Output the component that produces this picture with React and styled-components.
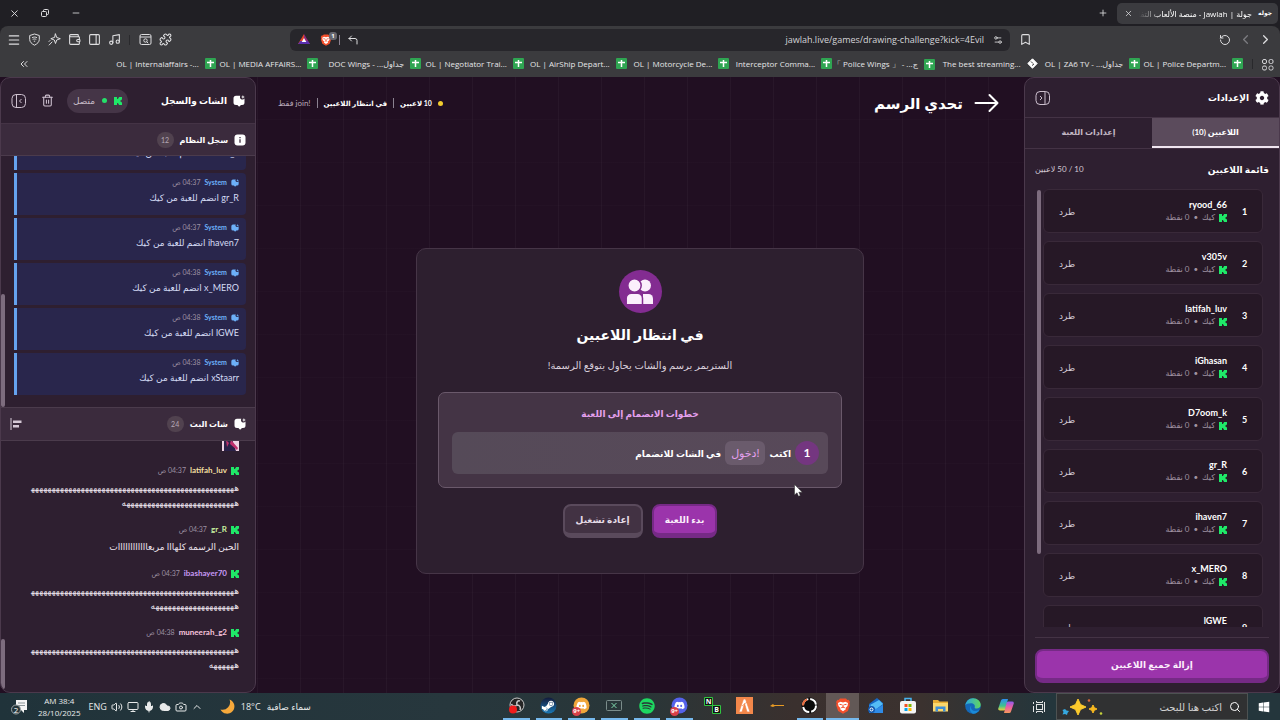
import React from 'react';
import styled, { createGlobalStyle, css } from 'styled-components';
import {
  X, Copy, Minus, Plus, Menu, Wallet, PanelRight, Music, Puzzle, CornerUpLeft,
  Bookmark, RotateCcw, ChevronLeft, ChevronRight, ChevronsLeft, Trash2, Settings2,
  Search, Volume2, Monitor, Mic, Cloud, Camera, ChevronUp,
} from 'lucide-react';
import { FaSteamSymbol, FaSpotify, FaDiscord, FaEdge, FaWindows, FaCog } from 'react-icons/fa';

const GlobalStyle = createGlobalStyle`
  * { box-sizing: border-box; }

  body {
    margin: 0;
    background: #210f22;
    font-family: Lato, "DejaVu Sans", sans-serif;
    color: #fff;
  }

  button, input { font: inherit; color: inherit; }
  ul, ol { list-style: none; margin: 0; padding: 0; }
  h1, h2, h3, p { margin: 0; }
`;

/* Browser window */

const Desktop = styled.div`
  display: flex;
  flex-direction: column;
  height: 100vh;
  overflow: hidden;
`;

const Chrome = styled.header`
  background: #201f24;
  font-family: "Open Sans", "DejaVu Sans", sans-serif;
`;

const TitleBar = styled.div`
  display: flex;
  align-items: center;
  height: 26px;
  padding: 0 2px;
`;

const Tab = styled.div`
  display: flex;
  align-items: center;
  gap: 6px;
  width: 161px;
  height: 21px;
  padding: 0 6px;
  border-radius: 5px;
  background: #3b3b3f;
  font-size: 8px;
`;

const Favicon = styled.span`
  font-size: 6px;
  font-weight: 700;
`;

const TabTitle = styled.span`
  flex: 1;
  overflow: hidden;
  white-space: nowrap;
  mask-image: linear-gradient(to left, #000 80%, transparent);
`;

const IconButton = styled.button`
  display: flex;
  align-items: center;
  justify-content: center;
  flex-shrink: 0;
  width: ${({ $size }) => $size || 20}px;
  height: ${({ $size }) => $size || 20}px;
  margin-right: ${({ $push }) => ($push ? 'auto' : '0')};
  padding: 0;
  border: 0;
  background: none;
  color: ${({ $color }) => $color || '#dedee0'};

  svg { flex-shrink: 0; }
`;

const WindowControls = styled.div`
  display: flex;
  gap: 11px;
  margin-right: auto;
  padding-left: 2px;
`;

const Toolbar = styled.div`
  display: flex;
  align-items: center;
  height: 27px;
  padding: 0 5px 0 4px;
  border-radius: 8px 8px 0 0;
  background: #3b3b3e;
`;

const AddressBar = styled.div`
  display: flex;
  align-items: center;
  gap: 4px;
  flex: 0 0 720px;
  height: 22px;
  margin: 0 5px 0 115px;
  padding: 0 2px 0 4px;
  border-radius: 6px;
  background: #27262b;
`;

const AddressInput = styled.input`
  flex: 1;
  min-width: 0;
  padding: 0;
  border: 0;
  outline: 0;
  background: none;
  font-size: 9px;
  text-align: right;
  color: #d4d4d8;
`;

const ToolGroup = styled.div`
  display: flex;
  align-items: center;
`;

const Divider = styled.span`
  width: 1px;
  height: ${({ $height }) => $height || 10}px;
  margin: 0 ${({ $gap }) => $gap || 0}px;
  background: ${({ $color }) => $color || '#8b8291'};
`;

const BraveBadge = styled.span`
  position: relative;
  display: flex;

  b {
    position: absolute;
    top: -2px;
    right: -5px;
    width: 8px;
    height: 8px;
    border-radius: 3px;
    background: #66666e;
    color: #fff;
    font-size: 6px;
    line-height: 8px;
    text-align: center;
  }
`;

const Bookmarks = styled.nav`
  display: flex;
  align-items: center;
  height: 24px;
  padding: 0 3px 2px 14px;
  background: #3b3b3e;
`;

const BookmarkList = styled.ul`
  display: grid;
  grid-template-columns: repeat(11, minmax(0, 1fr));
  flex: 0 1 1130px;
  margin: 0 5px 0 auto;
`;

const BookmarkLink = styled.a`
  display: flex;
  align-items: center;
  gap: 6px;
  color: #e6e6e8;
  font-size: 8px;
  font-weight: 500;
  white-space: nowrap;
  text-decoration: none;

  svg { flex-shrink: 0; }
`;

/* Page */

const Page = styled.div`
  display: flex;
  flex: 1;
  min-height: 0;
  background:
    repeating-linear-gradient(to right, transparent 0 42px, rgba(255, 255, 255, 0.03) 42px 43px),
    repeating-linear-gradient(to bottom, transparent 0 42px, rgba(255, 255, 255, 0.01) 42px 43px),
    #210f22;
`;

const Panel = styled.aside`
  display: flex;
  flex-direction: column;
  flex: 0 0 20%;
  min-width: 240px;
  border: 1px solid #4b394c;
  border-radius: 10px;
  background: #2e1f30;
  overflow: hidden;
`;

const PanelHeader = styled.div`
  display: flex;
  align-items: center;
  gap: 6px;
  height: ${({ $height }) => $height}px;
  flex-shrink: 0;
  padding: 0 10px;
  border-bottom: 1px solid #443345;
`;

const PanelTitle = styled.h2`
  margin-left: auto;
  font-size: 9px;
  font-weight: 700;
`;

const Tabs = styled.div`
  display: grid;
  grid-template-columns: 1fr 1fr;
  height: 31px;
  flex-shrink: 0;
  border-bottom: 1px solid #443345;
`;

const TabButton = styled.button`
  padding: 0 0 1px;
  border: 0;
  border-bottom: 2px solid ${({ $active }) => ($active ? '#f0e6f0' : 'transparent')};
  background: ${({ $active }) => ($active ? '#5b4b5c' : 'none')};
  color: ${({ $active }) => ($active ? '#fff' : '#c3b8c4')};
  font-size: 8px;
  font-weight: 700;
`;

const ListHeading = styled.div`
  display: flex;
  align-items: center;
  justify-content: space-between;
  height: 40px;
  flex-shrink: 0;
  padding: 0 10px;

  h3 { font-size: 9px; }
  span { font-size: 8px; color: #d3c9d4; }
`;

const ScrollArea = styled.div`
  position: relative;
  display: flex;
  flex-direction: column;
  flex: 1;
  min-height: 0;
  overflow: hidden;
  justify-content: ${({ $end }) => ($end ? 'flex-end' : 'flex-start')};
`;

const ScrollThumb = styled.span`
  position: absolute;
  left: ${({ $left }) => $left || 0}px;
  top: ${({ $top }) => $top};
  width: 4px;
  height: ${({ $height }) => $height};
  border-radius: 2px;
  background: #7d6c7e;
`;

const PlayerList = styled.ol`
  display: flex;
  flex-direction: column;
  gap: 8px;
  padding: 0 16px 0 18px;
`;

const PlayerRow = styled.li`
  display: flex;
  align-items: center;
  gap: 11px;
  height: 44px;
  flex-shrink: 0;
  padding: 0 11px 0 15px;
  border: 1px solid #392939;
  border-radius: 6px;
  background: #261826;
`;

const Rank = styled.span`
  width: 13px;
  font-size: 9px;
  font-weight: 700;
  text-align: center;
`;

const PlayerInfo = styled.div`
  flex: 1;
  line-height: 13px;
`;

const PlayerName = styled.div`
  font-size: 9px;
  font-weight: 700;
`;

const PlayerMeta = styled.div`
  display: flex;
  align-items: center;
  gap: 4px;
  font-size: 8px;
  color: #a093a1;
`;

const KickOut = styled.button`
  padding: 0;
  border: 0;
  background: none;
  font-size: 9px;
  color: #d3c9d4;
`;

const PanelFooter = styled.div`
  margin: 10px 10px 0;
  padding: 11px 0 9px;
  border-top: 1px solid #443345;
`;

const RaisedButton = styled.button`
  height: 34px;
  padding: 0 11px 1px;
  border: 2px solid #762a86;
  border-bottom-width: 5px;
  border-radius: 8px;
  background: #9b34ab;
  color: #fbeffc;
  font-size: 9px;
  font-weight: 700;

  ${({ $wide }) => $wide && css`width: 100%;`}
  ${({ $muted }) => $muted && css`
    border-color: #5a4a5c;
    background: #423243;
    color: #e6dce7;
  `}
`;

/* Game stage */

const Stage = styled.main`
  display: flex;
  flex-direction: column;
  flex: 1;
  min-width: 0;
`;

const StageHeader = styled.div`
  display: flex;
  align-items: center;
  gap: 11px;
  height: 52px;
  padding: 0 25px 0 22px;
`;

const StageTitle = styled.h1`
  margin-left: auto;
  font-size: 15px;
  font-weight: 700;
`;

const Status = styled.div`
  display: flex;
  align-items: center;
  gap: 6px;
  font-size: 7px;
  font-weight: 700;
  white-space: nowrap;
`;

const Dot = styled.i`
  width: 5px;
  height: 5px;
  border-radius: 50%;
  background: ${({ $color }) => $color};
`;

const Soft = styled.span`
  font-size: 8px;
  font-weight: 400;
  color: #b9abba;
`;

const StageBody = styled.div`
  display: flex;
  flex: 1;
  align-items: center;
  justify-content: center;
`;

const LobbyCard = styled.section`
  display: flex;
  flex-direction: column;
  align-items: center;
  width: 58%;
  min-width: 448px;
  padding: 21px 21px 35px;
  border: 1px solid #463547;
  border-radius: 10px;
  background: #2d1f2f;
`;

const RoundIcon = styled.div`
  display: flex;
  align-items: center;
  justify-content: center;
  width: 43px;
  height: 43px;
  border-radius: 50%;
  background: #832c91;
`;

const LobbyTitle = styled.h2`
  margin-top: 8px;
  font-size: 14px;
  line-height: 28px;
`;

const LobbyText = styled.p`
  margin-top: 7px;
  font-size: 10px;
  line-height: 18px;
  color: #d8ceda;
`;

const Steps = styled.div`
  width: 100%;
  margin: 18px 0 16px;
  padding: 11px 13px 13px;
  border: 1px solid #6a596b;
  border-radius: 7px;
  background: #443445;
  text-align: center;

  h3 {
    margin-bottom: 8px;
    color: #e4a0ee;
    font-size: 9px;
    line-height: 20px;
  }
`;

const Step = styled.div`
  display: flex;
  align-items: center;
  gap: 4px;
  height: 42px;
  padding: 0 9px;
  border-radius: 6px;
  background: linear-gradient(to left, #584959, #554a58);
  font-size: 9px;
  font-weight: 700;
`;

const StepNumber = styled.span`
  width: 24px;
  height: 24px;
  border-radius: 50%;
  background: #743680;
  font-size: 12px;
  line-height: 24px;
`;

const Command = styled.code`
  padding: 0 6px;
  border-radius: 6px;
  background: #6a5b6c;
  color: #e4a0ee;
  font-family: Lato, "DejaVu Sans", sans-serif;
  font-size: 11px;
  font-weight: 400;
  line-height: 24px;
`;

const Actions = styled.div`
  display: flex;
  gap: 9px;
`;

/* Chat */

const Connection = styled.span`
  display: flex;
  align-items: center;
  gap: 7px;
  height: 24px;
  padding: 0 6px;
  border-radius: 12px;
  background: #453547;
  color: #c5bac6;
  font-size: 9px;
`;

const SectionHeader = styled.div`
  display: flex;
  align-items: center;
  gap: 6px;
  height: ${({ $height }) => $height}px;
  flex-shrink: 0;
  padding: 0 9px;
  border-top: ${({ $line }) => ($line ? '1px solid #4b3b4c' : '0')};
  border-bottom: 1px solid #4b3b4c;
  background: #3b2b3d;

  h3 { font-size: 8px; }
`;

const Count = styled.span`
  min-width: 17px;
  border-radius: 9px;
  background: #51424f;
  color: #b5a8b6;
  font-size: 7px;
  line-height: 16px;
  text-align: center;
`;

const Log = styled.ul`
  display: flex;
  flex-direction: column;
  gap: 3px;
  padding: 0 9px 12px 13px;
`;

const LogItem = styled.li`
  height: 42px;
  flex-shrink: 0;
  padding: 2px 7px 0;
  border-left: 3px solid #65a2ee;
  border-radius: 0 4px 4px 0;
  background: #29264c;
`;

const Byline = styled.div`
  display: flex;
  align-items: center;
  gap: 4px;
  font-size: ${({ $size }) => $size || 7}px;
  line-height: 15px;

  b { color: ${({ $color }) => $color}; }
  time { color: #9d90a2; font-size: 7px; }
`;

const LogText = styled.p`
  font-size: 9px;
  line-height: 15px;
  color: #d5dcf5;
`;

const Messages = styled.ul`
  display: flex;
  flex-direction: column;
  gap: 12px;
  padding: 0 16px 20px 20px;
`;

const MessageText = styled.p`
  margin-top: 2px;
  color: #ece3ed;
  font-size: 9px;
  line-height: 15px;
  white-space: nowrap;
`;

/* Taskbar */

const Taskbar = styled.footer`
  display: flex;
  align-items: center;
  height: 27px;
  flex-shrink: 0;
  background: linear-gradient(to right, #20333a, #27373d 35%, #293638 50%, #3a302e 62%, #3b322f 72%, #24363c 82%, #24363c);
  font-family: "Open Sans", "DejaVu Sans", sans-serif;
`;

const SearchBox = styled.label`
  display: flex;
  align-items: center;
  gap: 7px;
  flex: 0 0 192px;
  min-width: 0;
  height: 27px;
  padding: 0 6px 0 4px;
  border: 1px solid #4d5252;
  background: #303132;

  input {
    flex: 1;
    width: 0;
    min-width: 0;
    padding: 0;
    border: 0;
    outline: 0;
    background: none;
    font-size: 10px;
  }
  input::placeholder { color: #d2d2d2; opacity: 1; }
  svg { flex-shrink: 0; }
`;

const Apps = styled.div`
  display: grid;
  grid-template-columns: repeat(16, 1fr);
  flex: 0 0 522px;
  height: 27px;
`;

const AppButton = styled.button`
  position: relative;
  display: flex;
  align-items: center;
  justify-content: center;
  margin: 0 ${({ $active }) => ($active ? 0 : 3)}px;
  padding: 0;
  border: 0;
  border-bottom: 2px solid ${({ $open }) => ($open ? '#76b9ed' : 'transparent')};
  background: ${({ $active }) => ($active ? '#625856' : 'none')};

  svg { flex-shrink: 0; }
`;

const Alert = styled.span`
  position: absolute;
  left: 4px;
  bottom: 2px;
  width: 9px;
  height: 9px;
  border-radius: 50%;
  background: #d8404a;
  color: #fff;
  font-size: 6px;
  font-weight: 700;
  line-height: 9px;
`;

const Weather = styled.div`
  display: flex;
  align-items: center;
  gap: 6px;
  margin-right: auto;
  font-size: 9px;
  color: #e8eaea;
`;

const Tray = styled.div`
  display: flex;
  align-items: center;
  gap: 4px;
  padding: 0 17px 0 11px;
  font-size: 9px;
  color: #e8eaea;
`;

const Clock = styled.div`
  margin: 0 4px 0 6px;
  font-size: 8px;
  line-height: 12px;
  text-align: center;
`;

const Pointer = styled.svg`
  position: fixed;
  left: 794px;
  top: 484px;
`;

/* Drawn icons */

const KickIcon = ({ size = 8 }) => (
  <svg width={size} height={size} viewBox="0 0 9 9" fill="#1fe868" aria-hidden="true">
    <path d="M0 0h3.400v2.300h1v-1h1V0H9v3H8v1H7v1h1v1h1v3H5.400V7.700h-1v-1h-1V9H0z" />
  </svg>
);

const BubbleIcon = ({ size = 12, color = '#fff' }) => (
  <svg width={size} height={size} viewBox="0 0 12 12" fill={color} aria-hidden="true">
    <path d="M3 .8h4.300a2.400 2.400 0 0 0 1.400 3.600 2.400 2.400 0 0 0 2.800-.9v3.900a2.500 2.500 0 0 1-2.500 2.500H8L6.100 11.800 4.400 9.900H3A2.500 2.500 0 0 1 .5 7.400V3.300A2.500 2.500 0 0 1 3 .8z" />
    <path d="M9.900 0l.6 1.400 1.400.6-1.400.5-.6 1.400-.5-1.400L8 2l1.400-.6z" />
  </svg>
);

const PanelIcon = ({ flip }) => (
  <svg width="16" height="16" viewBox="0 0 16 16" fill="none" stroke="#cdc0ce" aria-hidden="true">
    <rect x="1" y="1.500" width="13.500" height="13" rx="4" />
    <path d={flip ? 'M10 1.500v13M5 6l2 2-2 2' : 'M5.500 1.500v13M10.500 6l-2 2 2 2'} />
  </svg>
);

const BraveIcon = ({ size = 12 }) => (
  <svg width={size} height={size} viewBox="0 0 16 16" aria-hidden="true">
    <path d="M5 .5h6l1.300 1.500 1.200-.2L15 4l-.6 1.500.5 1.500-2 6L8 15.800 3.100 13l-2-6 .5-1.500L1 4l1.500-2.200L3.700 2z" fill="#f4502c" />
    <path d="M3 5l2.500-1.200L8 4.400l2.500-.6L13 5l-.5 3-2 2 .3 1.300L8 13.300l-2.800-2 .3-1.300-2-2z" fill="#fff" />
    <path d="M4.500 6.200l2.300.5M11.500 6.200l-2.300.5M8 6.500V9M6.300 9.800L8 9l1.700.8" stroke="#f4502c" strokeWidth="1.100" fill="none" />
  </svg>
);

const ShieldIcon = () => (
  <svg width="13" height="13" viewBox="0 0 13 13" fill="none" stroke="currentColor" aria-hidden="true">
    <path d="M6.500 1l4.800 1.500v4c0 2.500-2 4.300-4.800 5.700-2.800-1.400-4.800-3.200-4.800-5.700v-4z" />
    <path d="M4 4.800c1.500-1 3.500-1 5 0M4.700 6.500c1-.7 2.600-.7 3.600 0M5.800 8.200h1.400" />
  </svg>
);

const SparkIcon = () => (
  <svg width="13" height="13" viewBox="0 0 13 13" fill="none" stroke="currentColor" strokeLinejoin="round" strokeLinecap="round" aria-hidden="true">
    <path d="M7.500 1l1.200 3.500L12.300 5.700 8.700 7 7.500 10.500 6.300 7 2.800 5.700l3.500-1.200z" />
    <path d="M4 9l-2.800 3M2 7.500L1 8.500" />
  </svg>
);

const PageSearchIcon = () => (
  <svg width="13" height="13" viewBox="0 0 13 13" fill="none" stroke="currentColor" aria-hidden="true">
    <rect x="1" y="1.500" width="11" height="10" rx="1.500" />
    <path d="M1 4h11M7.800 8.800l1.400 1.400" />
    <circle cx="6.500" cy="7.500" r="1.700" />
  </svg>
);

const RestoreIcon = () => (
  <svg width="8" height="8" viewBox="0 0 8 8" fill="none" stroke="currentColor" aria-hidden="true">
    <rect x=".5" y="2.500" width="5" height="5" rx="1" />
    <path d="M2.500 2V1.500a1 1 0 0 1 1-1h3a1 1 0 0 1 1 1v3a1 1 0 0 1-1 1H6" />
  </svg>
);

const SheetIcon = () => (
  <svg width="11" height="11" viewBox="0 0 11 11" aria-hidden="true">
    <rect width="11" height="11" rx="1" fill="#2fa552" />
    <path d="M2 4.500h7M5.500 2v7" stroke="#fff" strokeWidth="1.500" />
  </svg>
);

const DiamondIcon = () => (
  <svg width="11" height="11" viewBox="0 0 11 11" aria-hidden="true">
    <path d="M5.500.8l4.700 4.700-4.700 4.700L.8 5.500z" fill="#fff" stroke="#fff" strokeLinejoin="round" />
    <path d="M4 3.500l2 2M5 7.500l2-1.500" stroke="#3b3b3e" />
  </svg>
);

const GridIcon = () => (
  <svg width="13" height="13" viewBox="0 0 13 13" fill="none" stroke="#d5d5d8" aria-hidden="true">
    <rect x="1.500" y="1.500" width="4" height="4" rx="1.500" />
    <rect x="8" y="1.500" width="4" height="4" rx="1.500" />
    <rect x="1.500" y="8" width="4" height="4" rx="1.500" />
    <rect x="8" y="8" width="4" height="4" rx="1.500" />
  </svg>
);

const TriangleIcon = () => (
  <svg width="12" height="11" viewBox="0 0 12 11" aria-hidden="true">
    <path d="M6 0L0 10h6z" fill="#e2452b" />
    <path d="M6 0l6 10H6z" fill="#8c2a7c" />
    <path d="M0 10h12L9.500 7h-7z" fill="#5a2fb0" />
    <path d="M6 4l2.300 4H3.700z" fill="#fff" />
  </svg>
);

const PlayersIcon = () => (
  <svg width="28" height="26" viewBox="0 0 28 26" fill="#fbeffc" aria-hidden="true">
    <circle cx="19" cy="6.500" r="6" />
    <path d="M17 15h5.500a4.500 4.500 0 0 1 4.500 4.500V25H17z" />
    <g stroke="#832c91" strokeWidth="1.500">
      <circle cx="8.500" cy="6.500" r="6.700" />
      <path d="M6 14.300h5.500a5 5 0 0 1 5 5v6.400H.200v-6.400a5 5 0 0 1 5-5z" />
    </g>
  </svg>
);

const ArrowIcon = () => (
  <svg width="25" height="20" viewBox="0 0 25 20" fill="none" stroke="#fff" strokeWidth="2" strokeLinecap="round" strokeLinejoin="round" aria-hidden="true">
    <path d="M1.500 10h21.500M15.500 2l8 8-8 8" />
  </svg>
);

const InfoIcon = () => (
  <svg width="12" height="12" viewBox="0 0 12 12" aria-hidden="true">
    <rect x=".5" y=".5" width="11" height="11" rx="3" fill="#fff" />
    <path d="M6 5.300v3.500M6 3v1.200" stroke="#3b2b3d" strokeWidth="1.300" />
  </svg>
);

const AlignIcon = () => (
  <svg width="12" height="12" viewBox="0 0 12 12" fill="#d6cad7" aria-hidden="true">
    <path d="M.5 0h1v12h-1zM3 2.500h8.500V5H3zM3 7h6v2.500H3z" />
  </svg>
);

const Emote = styled.svg`
  display: block;
  width: 17px;
  height: 15px;
`;

const EmoteImage = () => (
  <Emote viewBox="0 0 17 15" aria-hidden="true">
    <path d="M0 0h17v15H0z" fill="#2b2148" />
    <path d="M0 0h2v15H0zM9 0h8v15h-3z" fill="#f0d4e4" />
    <path d="M4 4l3 3-2 4zM9 4l7 8-1 2-7-6z" fill="#c0306c" />
  </Emote>
);

const ObsIcon = () => (
  <svg width="17" height="17" viewBox="0 0 17 17" aria-hidden="true">
    <circle cx="9" cy="8" r="7" fill="#252525" stroke="#c9c9c9" />
    <path d="M9 8c-1-3 1-5 3-4M9 8c3 0 4 3 3 5M9 8C7 10 4 9 3.500 7" stroke="#c9c9c9" strokeWidth="1.500" fill="none" />
    <circle cx="5" cy="12.500" r="4" fill="#f01c1c" />
  </svg>
);

const SteamIcon = () => (
  <svg width="17" height="17" viewBox="0 0 17 17" aria-hidden="true">
    <defs>
      <linearGradient id="steam" x1="0" y1="0" x2="0" y2="1">
        <stop offset="0" stopColor="#131a3a" /><stop offset="1" stopColor="#1a78b5" />
      </linearGradient>
    </defs>
    <circle cx="8.500" cy="8.500" r="8" fill="url(#steam)" />
    <FaSteamSymbol x="1" y="2" size={14} color="#fff" />
  </svg>
);

const OrangeChatIcon = () => (
  <svg width="17" height="17" viewBox="0 0 17 17" aria-hidden="true">
    <circle cx="8.500" cy="8.500" r="8" fill="#f0a63a" />
    <FaDiscord x="3" y="3" size={11} color="#fff" />
  </svg>
);

const RoundDiscord = () => (
  <svg width="17" height="17" viewBox="0 0 17 17" aria-hidden="true">
    <circle cx="8.500" cy="8.500" r="8" fill="#5562ea" />
    <FaDiscord x="3" y="3" size={11} color="#fff" />
  </svg>
);

const ScreenIcon = () => (
  <svg width="16" height="11" viewBox="0 0 16 11" fill="none" aria-hidden="true">
    <rect x=".5" y=".5" width="15" height="10" rx="1" stroke="#7b8d8b" />
    <path d="M5.500 3l5 5M10.500 3l-5 5" stroke="#7fd6ac" />
  </svg>
);

const BlocksIcon = () => (
  <svg width="17" height="17" viewBox="0 0 17 17" aria-hidden="true">
    <path d="M.5.5h8v8h-8zM8.500 8.500h8v8h-8z" fill="#101410" stroke="#31c441" />
    <text x="4.500" y="7" fill="#fff" fontSize="7" fontWeight="700" textAnchor="middle">N</text>
    <text x="12.500" y="15" fill="#fff" fontSize="7" fontWeight="700" textAnchor="middle">B</text>
  </svg>
);

const FiveIcon = () => (
  <svg width="17" height="17" viewBox="0 0 17 17" aria-hidden="true">
    <path d="M0 0h17v17H0z" fill="#f2874a" />
    <path d="M3 15L7.500 2h2L14 15h-3L8.500 6.500 6 15zM6 9l5-4" fill="#fff" stroke="#f2874a" strokeWidth=".7" />
  </svg>
);

const DashIcon = () => (
  <svg width="14" height="5" viewBox="0 0 14 5" aria-hidden="true">
    <path d="M0 3l3-2 1 1h10v1H5L3 4z" fill="#e89a24" />
  </svg>
);

const RingIcon = () => (
  <svg width="17" height="17" viewBox="0 0 17 17" fill="none" aria-hidden="true">
    <circle cx="8.500" cy="8.500" r="8" fill="#0b0b0b" />
    <circle cx="8.500" cy="8.500" r="6.500" stroke="#fff" strokeWidth="2" strokeDasharray="8.200 2" />
    <path d="M2 8.500A6.500 6.500 0 0 1 6 2.500" stroke="#e96b3c" strokeWidth="2" />
  </svg>
);

const MailIcon = () => (
  <svg width="17" height="17" viewBox="0 0 17 17" aria-hidden="true">
    <path d="M2 7l8-6 6 5v9H2z" fill="#1768c4" />
    <path d="M3 8l9-5 4 4-8 6z" fill="#54bdf5" />
    <path d="M2 8l7 4 7-4v8H2z" fill="#2f8be6" />
    <circle cx="4.500" cy="12.500" r="3.500" fill="#1358ad" />
    <circle cx="4.500" cy="12.500" r="1.500" fill="none" stroke="#fff" />
  </svg>
);

const StoreIcon = () => (
  <svg width="16" height="17" viewBox="0 0 16 17" aria-hidden="true">
    <path d="M5 4V1.500h6V4" fill="none" stroke="#49b4ef" strokeWidth="1.500" />
    <rect y="4" width="16" height="12.500" rx="2" fill="#f4f4f4" />
    <path d="M4.500 7h3v3h-3z" fill="#f25022" />
    <path d="M8.500 7h3v3h-3z" fill="#7fba00" />
    <path d="M4.500 11h3v3h-3z" fill="#00a4ef" />
    <path d="M8.500 11h3v3h-3z" fill="#ffb900" />
  </svg>
);

const FolderIcon = () => (
  <svg width="15" height="13" viewBox="0 0 15 13" aria-hidden="true">
    <path d="M0 1h5l1.500 1.500H15V12H0z" fill="#e8ad35" />
    <path d="M0 4h15v8.500H0z" fill="#fbd76c" />
    <path d="M2.500 7.500h10v5H10V10H5v2.500H2.500z" fill="#3f8fd6" />
  </svg>
);

const EdgeIcon = () => (
  <svg width="16" height="16" viewBox="0 0 16 16" aria-hidden="true">
    <defs>
      <linearGradient id="edgeTop" x1="0" y1="0" x2="1" y2="0">
        <stop offset="0" stopColor="#2aa6e0" /><stop offset="1" stopColor="#62d65c" />
      </linearGradient>
    </defs>
    <circle cx="8" cy="8" r="7.800" fill="#1468b8" />
    <path d="M.3 7.500C.8 3.500 4 .3 8 .3c4.500 0 7.700 3 7.700 6.500 0 2.500-2 3.800-4 3.800-1.500 0-2.300-.6-2-1.300C10.500 7 8.500 5.200 6 5.200 3 5.200.8 6 .3 7.500z" fill="url(#edgeTop)" />
    <path d="M6.500 7.500c-1.500 3 .8 6 4.500 5.500 1.500-.2 2.700-.8 3.500-1.300-1 2-3.500 4-6.500 4C4.500 14 4 9.500 6.500 7.500z" fill="#1a8ad8" />
  </svg>
);

const CopilotIcon = () => (
  <svg width="16" height="16" viewBox="0 0 16 16" aria-hidden="true">
    <defs>
      <linearGradient id="copilotLeft" x1="0" y1="0" x2="0" y2="1">
        <stop offset="0" stopColor="#2d8df2" /><stop offset=".6" stopColor="#3fc28c" /><stop offset="1" stopColor="#f0d03c" />
      </linearGradient>
      <linearGradient id="copilotRight" x1="0" y1="0" x2="0" y2="1">
        <stop offset="0" stopColor="#8f5af0" /><stop offset=".5" stopColor="#ec5fa0" /><stop offset="1" stopColor="#f79a5a" />
      </linearGradient>
    </defs>
    <path d="M5 1h5L7.500 11a2 2 0 0 1-2 1.500H2A1.800 1.800 0 0 1 .3 10.200L3 2.500A2 2 0 0 1 5 1z" fill="url(#copilotLeft)" />
    <path d="M11 15H6l2.500-10a2 2 0 0 1 2-1.500H14a1.800 1.800 0 0 1 1.700 2.300L13 13.500a2 2 0 0 1-2 1.500z" fill="url(#copilotRight)" />
  </svg>
);

const TaskViewIcon = () => (
  <svg width="12" height="12" viewBox="0 0 12 12" fill="none" stroke="#e2e4e4" aria-hidden="true">
    <rect x="3.500" y="3.500" width="6" height="5" />
    <path d="M3.500 0v1.500h6V0M3.500 12v-1.500h6V12M.5 1v2M.5 5v6M11.500 1v10" />
  </svg>
);

const SparklesIcon = () => (
  <svg width="42" height="18" viewBox="0 0 42 18" aria-hidden="true">
    <path d="M17 1l2.500 5.500L25 9l-5.500 2.500L17 17l-2.500-5.500L9 9l5.500-2.500z" fill="#fbc92c" stroke="#fbc92c" strokeLinejoin="round" />
    <path d="M32 7l1.300 2.700L36 11l-2.700 1.300L32 15l-1.300-2.700L28 11l2.700-1.300z" fill="#f7b820" stroke="#f7b820" strokeLinejoin="round" />
    <path d="M4 11l1.500 1.500L8 13l-1.500 2L6 17l-2-1-2.500.500L2.500 14 1.500 12z" fill="#35a8e0" />
    <circle cx="28" cy="2.500" r="1.300" fill="#e0693a" />
    <circle cx="40" cy="15.500" r="1.300" fill="#c6d13c" />
  </svg>
);

const MoonIcon = () => (
  <svg width="15" height="15" viewBox="0 0 15 15" aria-hidden="true">
    <path d="M9.500.5A7.300 7.300 0 1 1 .5 10.500 7.500 7.500 0 0 0 9.500.5z" fill="#f6a93b" />
  </svg>
);

const NoticeIcon = () => (
  <svg width="17" height="17" viewBox="0 0 17 17" aria-hidden="true">
    <path d="M5 2h11v10h-3v3l-3-3H5z" fill="#f4f4f4" />
    <path d="M7 5h7M7 7.500h7" stroke="#8b9598" />
    <circle cx="5" cy="11.500" r="4.500" fill="#26363b" stroke="#9aa3a5" />
    <text x="5" y="14.500" fill="#fff" fontSize="8" textAnchor="middle">2</text>
  </svg>
);

const bookmarks = [
  'OL | Police Departm...',
  'OL | ZA6 TV - ...جداول',
  'The best streaming...',
  '「 Police Wings 」 - ...ج',
  'Interceptor Comma...',
  'OL | Motorcycle De...',
  'OL | AirShip Depart...',
  'OL | Negotiator Trai...',
  'DOC Wings - ...جداول',
  'OL | MEDIA AFFAIRS...',
  'OL | Internalaffairs -...',
];

const players = ['ryood_66', 'v305v', 'latifah_luv', 'iGhasan', 'D7oom_k', 'gr_R', 'ihaven7', 'x_MERO', 'lGWE'];

const logs = [
  { name: 'D7oom_k', time: '04:37' },
  { name: 'gr_R', time: '04:37' },
  { name: 'ihaven7', time: '04:37' },
  { name: 'x_MERO', time: '04:38' },
  { name: 'lGWE', time: '04:38' },
  { name: 'xStaarr', time: '04:38' },
];

// the joiner keeps a laugh connected when it runs on to the next line
const laugh = (count, runsOn) => 'ه'.repeat(count) + (runsOn ? '\u200d' : '');

const messages = [
  { name: 'latifah_luv', color: '#f3dfa0', time: '04:37', lines: [laugh(50, true), laugh(28)] },
  { name: 'gr_R', color: '#c9f2a0', time: '04:37', lines: ['الحين الرسمه كلهااا مربعاااااااااااات'] },
  { name: 'ibashayer70', color: '#c79af5', time: '04:37', lines: [laugh(50, true), laugh(21)] },
  { name: 'muneerah_g2', color: '#f7c4dc', time: '04:38', lines: [laugh(50, true), laugh(7)] },
];

const apps = [
  { name: 'Copilot', icon: <CopilotIcon /> },
  { name: 'Edge', icon: <EdgeIcon /> },
  { name: 'Files', icon: <FolderIcon /> },
  { name: 'Store', icon: <StoreIcon /> },
  { name: 'Mail', icon: <MailIcon /> },
  { name: 'Brave', icon: <BraveIcon size={16} />, open: true, active: true },
  { name: 'Ring', icon: <RingIcon />, open: true },
  { name: 'Dash', icon: <DashIcon /> },
  { name: 'FiveM', icon: <FiveIcon /> },
  { name: 'Blocks', icon: <BlocksIcon /> },
  { name: 'Discord', icon: <RoundDiscord />, open: true, alert: '9+' },
  { name: 'Spotify', icon: <FaSpotify size={16} color="#1ed760" />, open: true },
  { name: 'Screen', icon: <ScreenIcon />, open: true },
  { name: 'Chat', icon: <OrangeChatIcon />, open: true, alert: '9+' },
  { name: 'Steam', icon: <SteamIcon />, open: true },
  { name: 'OBS', icon: <ObsIcon />, open: true },
];

function BrowserChrome() {
  return (
    <Chrome>
      <TitleBar>
        <Tab>
          <Favicon>جوله</Favicon>
          <TabTitle>جولة | Jawlah - منصة الألعاب التفا</TabTitle>
          <IconButton $size={10} aria-label="إغلاق التبويب"><X size={9} /></IconButton>
        </Tab>
        <IconButton $size={28} aria-label="تبويب جديد"><Plus size={10} /></IconButton>
        <WindowControls>
          <IconButton aria-label="تصغير"><Minus size={10} /></IconButton>
          <IconButton aria-label="استعادة"><RestoreIcon /></IconButton>
          <IconButton aria-label="إغلاق"><X size={11} /></IconButton>
        </WindowControls>
      </TitleBar>
      <Toolbar>
        <IconButton aria-label="رجوع"><ChevronRight size={15} /></IconButton>
        <IconButton $color="#7d7d82" aria-label="تقدم"><ChevronLeft size={15} /></IconButton>
        <IconButton aria-label="تحديث"><RotateCcw size={12} /></IconButton>
        <IconButton $push aria-label="حفظ"><Bookmark size={13} /></IconButton>
        <AddressBar>
          <IconButton aria-label="إعدادات الموقع"><Settings2 size={10} /></IconButton>
          <AddressInput dir="ltr" aria-label="العنوان" defaultValue="jawlah.live/games/drawing-challenge?kick=4Evil" />
          <IconButton $size={16} aria-label="مشاركة"><CornerUpLeft size={12} /></IconButton>
          <Divider $gap={1} />
          <IconButton $size={16} aria-label="الحماية">
            <BraveBadge><BraveIcon /><b>1</b></BraveBadge>
          </IconButton>
          <IconButton aria-label="المكافآت"><TriangleIcon /></IconButton>
        </AddressBar>
        <ToolGroup>
          <IconButton aria-label="الإضافات"><Puzzle size={13} /></IconButton>
          <IconButton aria-label="بحث"><PageSearchIcon /></IconButton>
          <Divider $gap={5} $color="#29292c" />
          <IconButton aria-label="الموسيقى"><Music size={13} /></IconButton>
          <IconButton aria-label="الشريط الجانبي"><PanelRight size={13} /></IconButton>
          <IconButton aria-label="المحفظة"><Wallet size={13} /></IconButton>
          <IconButton aria-label="المساعد"><SparkIcon /></IconButton>
          <IconButton aria-label="الخصوصية"><ShieldIcon /></IconButton>
          <IconButton aria-label="القائمة"><Menu size={14} /></IconButton>
        </ToolGroup>
      </Toolbar>
      <Bookmarks>
        <IconButton aria-label="كل الإشارات"><GridIcon /></IconButton>
        <Divider $gap={4} $color="#29292c" />
        <BookmarkList>
          {bookmarks.map((title, i) => (
            <li key={title}>
              <BookmarkLink href="#">
                {i === 2 ? <DiamondIcon /> : <SheetIcon />}
                <span dir="ltr">{title}</span>
              </BookmarkLink>
            </li>
          ))}
        </BookmarkList>
        <IconButton aria-label="المزيد"><ChevronsLeft size={12} /></IconButton>
      </Bookmarks>
    </Chrome>
  );
}

function SettingsPanel() {
  return (
    <Panel>
      <PanelHeader $height={40}>
        <FaCog size={14} />
        <PanelTitle>الإعدادات</PanelTitle>
        <IconButton $size={16} aria-label="طي الإعدادات"><PanelIcon flip /></IconButton>
      </PanelHeader>
      <Tabs>
        <TabButton $active>اللاعبين (10)</TabButton>
        <TabButton>إعدادات اللعبة</TabButton>
      </Tabs>
      <ListHeading>
        <h3>قائمة اللاعبين</h3>
        <span>10 / 50 لاعبين</span>
      </ListHeading>
      <ScrollArea>
        <PlayerList>
          {players.map((name, i) => (
            <PlayerRow key={name}>
              <Rank>{i + 1}</Rank>
              <PlayerInfo>
                <PlayerName>{name}</PlayerName>
                <PlayerMeta>
                  <KickIcon />
                  <span>كيك</span>
                  <span>•</span>
                  <span>0 نقطة</span>
                </PlayerMeta>
              </PlayerInfo>
              <KickOut>طرد</KickOut>
            </PlayerRow>
          ))}
        </PlayerList>
        <ScrollThumb $left={12} $top="1px" $height="83%" />
      </ScrollArea>
      <PanelFooter>
        <RaisedButton $wide>إزالة جميع اللاعبين</RaisedButton>
      </PanelFooter>
    </Panel>
  );
}

function GameStage() {
  return (
    <Stage>
      <StageHeader>
        <IconButton $size={25} aria-label="رجوع"><ArrowIcon /></IconButton>
        <StageTitle>تحدي الرسم</StageTitle>
        <Status>
          <Dot $color="#f2cc2e" />
          <span>10 لاعبين</span>
          <Divider />
          <span>في انتظار اللاعبين</span>
          <Divider />
          <Soft>!join فقط</Soft>
        </Status>
      </StageHeader>
      <StageBody>
        <LobbyCard>
          <RoundIcon><PlayersIcon /></RoundIcon>
          <LobbyTitle>في انتظار اللاعبين</LobbyTitle>
          <LobbyText>الستريمر يرسم والشات يحاول يتوقع الرسمة!</LobbyText>
          <Steps>
            <h3>خطوات الانضمام إلى اللعبة</h3>
            <Step>
              <StepNumber>1</StepNumber>
              <span>اكتب</span>
              <Command>!دخول</Command>
              <span>في الشات للانضمام</span>
            </Step>
          </Steps>
          <Actions>
            <RaisedButton>بدء اللعبة</RaisedButton>
            <RaisedButton $muted>إعادة تشغيل</RaisedButton>
          </Actions>
        </LobbyCard>
      </StageBody>
    </Stage>
  );
}

function ChatPanel() {
  return (
    <Panel>
      <PanelHeader $height={46}>
        <BubbleIcon />
        <PanelTitle>الشات والسجل</PanelTitle>
        <Connection>
          <KickIcon />
          <Dot $color="#25e06a" />
          متصل
        </Connection>
        <IconButton $size={28} $color="#cdc0ce" aria-label="مسح"><Trash2 size={13} /></IconButton>
        <IconButton $size={16} aria-label="طي الشات"><PanelIcon /></IconButton>
      </PanelHeader>
      <SectionHeader $height={32}>
        <InfoIcon />
        <h3>سجل النظام</h3>
        <Count>12</Count>
      </SectionHeader>
      <ScrollArea $end>
        <Log>
          {logs.map(({ name, time }) => (
            <LogItem key={name}>
              <Byline $color="#6cb0f8">
                <BubbleIcon size={8} color="#6cb0f8" />
                <b>System</b>
                <time>{time} ص</time>
              </Byline>
              <LogText><bdi>{name}</bdi> انضم للعبة من كيك</LogText>
            </LogItem>
          ))}
        </Log>
        <ScrollThumb $top="55%" $height="45%" />
      </ScrollArea>
      <SectionHeader $height={34} $line>
        <BubbleIcon />
        <h3>شات البث</h3>
        <Count>24</Count>
        <IconButton $size={12} $push aria-label="محاذاة"><AlignIcon /></IconButton>
      </SectionHeader>
      <ScrollArea $end>
        <Messages>
          <li><EmoteImage /></li>
          {messages.map(({ name, color, time, lines }) => (
            <li key={name}>
              <Byline $size={8} $color={color}>
                <KickIcon />
                <b>{name}</b>
                <time>{time} ص</time>
              </Byline>
              <MessageText>
                {lines.map((line, i) => (
                  <React.Fragment key={line}>{i > 0 && <br />}{line}</React.Fragment>
                ))}
              </MessageText>
            </li>
          ))}
        </Messages>
        <ScrollThumb $top="79%" $height="20%" />
      </ScrollArea>
    </Panel>
  );
}

function SystemBar() {
  return (
    <Taskbar>
      <IconButton $size={32} $color="#fff" aria-label="ابدأ"><FaWindows size={12} /></IconButton>
      <SearchBox>
        <Search size={12} />
        <input placeholder="اكتب هنا للبحث" aria-label="بحث" />
        <SparklesIcon />
      </SearchBox>
      <IconButton $size={34} aria-label="عرض المهام"><TaskViewIcon /></IconButton>
      <Apps>
        {apps.map(({ name, icon, open, active, alert }) => (
          <AppButton key={name} $open={open} $active={active} aria-label={name}>
            {icon}
            {alert && <Alert dir="ltr">{alert}</Alert>}
          </AppButton>
        ))}
      </Apps>
      <Weather>
        <span>سماء صافية</span>
        <span dir="ltr">18°C</span>
        <MoonIcon />
      </Weather>
      <Tray>
        <ChevronUp size={12} />
        <Camera size={12} />
        <Cloud size={12} fill="#e8eaea" />
        <Mic size={12} fill="#e8eaea" />
        <Monitor size={12} />
        <Volume2 size={12} />
        <span>ENG</span>
        <Clock dir="ltr">AM 38:4<br />28/10/2025</Clock>
        <NoticeIcon />
      </Tray>
    </Taskbar>
  );
}

function App() {
  return (
    <Desktop dir="rtl">
      <GlobalStyle />
      <BrowserChrome />
      <Page>
        <SettingsPanel />
        <GameStage />
        <ChatPanel />
      </Page>
      <SystemBar />
      <Pointer width="9" height="13" viewBox="0 0 9 13" aria-hidden="true">
        <path d="M.5.5v10.500L3 8.800l1.500 3.500 1.800-.8L4.800 8.200h3.500z" fill="#fff" stroke="#2a2a2a" strokeWidth=".5" />
      </Pointer>
    </Desktop>
  );
}

export default App;
